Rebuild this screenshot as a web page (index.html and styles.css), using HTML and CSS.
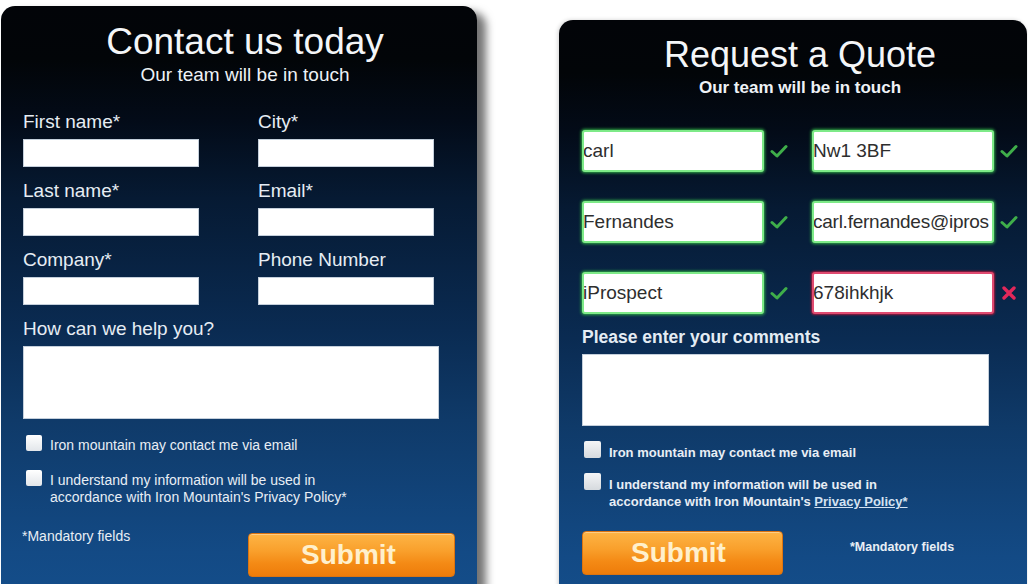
FILE: index.html
```html
<!DOCTYPE html>
<html>
<head>
<meta charset="utf-8">
<title>Forms</title>
<link rel="stylesheet" href="styles.css">
</head>
<body>
<div class="stage">
  <section class="panel contact">
    <header class="head">
      <h1 class="title">Contact us today</h1>
      <p class="subtitle">Our team will be in touch</p>
    </header>
    <div class="grid">
      <div class="field"><span class="lbl">First name*</span><div class="box"></div></div>
      <div class="field"><span class="lbl">City*</span><div class="box"></div></div>
      <div class="field"><span class="lbl">Last name*</span><div class="box"></div></div>
      <div class="field"><span class="lbl">Email*</span><div class="box"></div></div>
      <div class="field"><span class="lbl">Company*</span><div class="box"></div></div>
      <div class="field"><span class="lbl">Phone Number</span><div class="box"></div></div>
    </div>
    <span class="lbl area-lbl">How can we help you?</span>
    <div class="area"></div>
    <div class="checks">
      <div class="check"><span class="cb"></span><span class="ctext">Iron mountain may contact me via email</span></div>
      <div class="check"><span class="cb"></span><span class="ctext">I understand my information will be used in<br>accordance with Iron Mountain's Privacy Policy*</span></div>
    </div>
    <div class="foot">
      <span class="mand">*Mandatory fields</span>
      <button class="submit" type="button">Submit</button>
    </div>
  </section>

  <section class="panel quote">
    <header class="head">
      <h1 class="title">Request a Quote</h1>
      <p class="subtitle">Our team will be in touch</p>
    </header>
    <div class="qgrid">
      <div class="qfield"><div class="qbox ok">carl</div><svg class="tick" viewBox="0 0 18 14"><path d="M2 7.5 L7 12 L16 2.5"/></svg></div>
      <div class="qfield"><div class="qbox ok">Nw1 3BF</div><svg class="tick" viewBox="0 0 18 14"><path d="M2 7.5 L7 12 L16 2.5"/></svg></div>
      <div class="qfield"><div class="qbox ok">Fernandes</div><svg class="tick" viewBox="0 0 18 14"><path d="M2 7.5 L7 12 L16 2.5"/></svg></div>
      <div class="qfield"><div class="qbox ok tight">carl.fernandes@ipros</div><svg class="tick" viewBox="0 0 18 14"><path d="M2 7.5 L7 12 L16 2.5"/></svg></div>
      <div class="qfield"><div class="qbox ok">iProspect</div><svg class="tick" viewBox="0 0 18 14"><path d="M2 7.5 L7 12 L16 2.5"/></svg></div>
      <div class="qfield"><div class="qbox bad">678ihkhjk</div><svg class="cross" viewBox="0 0 18 14"><path d="M4 2 L14 12 M14 2 L4 12"/></svg></div>
    </div>
    <span class="qlbl">Please enter your comments</span>
    <div class="qarea"></div>
    <div class="qchecks">
      <div class="qcheck"><span class="qcb"></span><span class="qctext">Iron mountain may contact me via email</span></div>
      <div class="qcheck"><span class="qcb"></span><span class="qctext">I understand my information will be used in<br>accordance with Iron Mountain's <span class="link">Privacy Policy*</span></span></div>
    </div>
    <div class="qfoot">
      <button class="submit qsubmit" type="button">Submit</button>
      <span class="qmand">*Mandatory fields</span>
    </div>
  </section>
</div>
</body>
</html>
```

FILE: styles.css
```css
html, body {
  margin: 0;
  padding: 0;
  height: 584px;
  overflow: hidden;
  background: #ffffff;
  font-family: "Liberation Sans", Arial, sans-serif;
}

.stage {
  display: flex;
  align-items: flex-start;
  height: 584px;
}

.panel {
  box-sizing: border-box;
  border-radius: 14px 14px 0 0;
  color: #eef3f9;
  background: linear-gradient(to bottom,
    #020408 0%,
    #020508 9%,
    #030b18 19%,
    #061a33 32%,
    #0a2b52 54%,
    #0f3a69 69%,
    #134a85 91%,
    #144e8b 100%);
}

.contact {
  margin: 6px 0 0 1px;
  width: 476px;
  height: 600px;
  flex: none;
  padding: 16px 38px 0 22px;
  box-shadow: 9px 6px 9px rgba(0, 0, 0, 0.55);
}

.quote {
  margin: 20px 0 0 82px;
  width: 468px;
  height: 590px;
  flex: none;
  padding: 15px 9px 0 23px;
  box-shadow: -1px 0 4px rgba(0, 0, 0, 0.18);
}

.head {
  text-align: center;
}

.contact .head {
  margin: 0 -38px 0 -22px;
  padding-left: 12px;
}

.quote .head {
  margin: 0 -9px 0 -23px;
  padding-left: 14px;
}

.title {
  margin: 0;
  font-weight: normal;
  color: #f4f6f8;
}

.contact .title {
  font-size: 37px;
  line-height: 40px;
}

.quote .title {
  font-size: 36px;
  line-height: 40px;
}

.subtitle {
  margin: 2px 0 0;
  color: #eef2f6;
}

.contact .subtitle {
  font-size: 19px;
  line-height: 22px;
}

.quote .subtitle {
  margin-top: 3px;
  font-size: 17px;
  line-height: 20px;
  font-weight: bold;
}

/* Left form */
.grid {
  margin-top: 25px;
  display: grid;
  grid-template-columns: 176px 176px;
  column-gap: 59px;
  row-gap: 13px;
}

.field {
  display: flex;
  flex-direction: column;
}

.lbl {
  display: block;
  font-size: 19px;
  line-height: 22px;
  color: #e6edf4;
  margin-bottom: 6px;
}

.box {
  box-sizing: border-box;
  height: 28px;
  background: #ffffff;
  border: 1px solid #c4cfdb;
}

.area-lbl {
  margin-top: 13px;
}

.area {
  box-sizing: border-box;
  width: 416px;
  height: 73px;
  background: #ffffff;
  border: 1px solid #c4cfdb;
}

.checks {
  margin-top: 18px;
  display: flex;
  flex-direction: column;
  gap: 18px;
}

.check {
  display: flex;
  align-items: flex-start;
  gap: 8px;
}

.cb {
  flex: none;
  width: 16px;
  height: 16px;
  margin: -2px 0 0 3px;
  border-radius: 2px;
  background: linear-gradient(#ffffff, #e2e6ea);
}

.ctext {
  font-size: 14px;
  line-height: 17px;
  color: #e8eef5;
}

.foot {
  margin: 22px -16px 0 0;
  display: flex;
  justify-content: space-between;
  align-items: flex-start;
}

.mand {
  margin-left: -1px;
  font-size: 14px;
  line-height: 16px;
  color: #e8eef5;
}

.submit {
  box-sizing: border-box;
  width: 207px;
  height: 44px;
  margin-top: 5px;
  padding: 0 6px 0 0;
  border: 1px solid #dc7410;
  border-radius: 4px;
  background: linear-gradient(to bottom, #fdb445 0%, #f9a02c 40%, #f48a15 70%, #ee7c0a 100%);
  box-shadow: inset 0 1px 0 rgba(255, 255, 255, 0.35);
  color: #fff0cc;
  font-family: "Liberation Sans", Arial, sans-serif;
  font-weight: bold;
  font-size: 28px;
  line-height: 42px;
  text-align: center;
}

/* Right form */
.qgrid {
  margin-top: 32px;
  display: grid;
  grid-template-columns: 205px 205px;
  column-gap: 25px;
  row-gap: 29px;
}

.qfield {
  display: flex;
  align-items: center;
  gap: 6px;
}

.qbox {
  box-sizing: border-box;
  flex: none;
  width: 182px;
  height: 42px;
  padding-left: 0;
  text-indent: -1px;
  background: #ffffff;
  border-radius: 3px;
  font-size: 19px;
  line-height: 38px;
  color: #2e2e2e;
  white-space: nowrap;
  overflow: hidden;
}

.qbox.tight {
  letter-spacing: -0.25px;
}

.qbox.ok {
  border: 2px solid #7eea88;
  box-shadow: 0 0 3px 1px #2fa845;
}

.qbox.bad {
  border: 2px solid #e04a70;
  box-shadow: 0 0 2px 1px #9c1a3c;
}

.tick,
.cross {
  flex: none;
  width: 18px;
  height: 14px;
  fill: none;
}

.tick path {
  stroke: #3fae4a;
  stroke-width: 3;
  stroke-linecap: round;
  stroke-linejoin: round;
}

.cross path {
  stroke: #e2285a;
  stroke-width: 3.4;
  stroke-linecap: round;
}

.qlbl {
  display: block;
  margin-top: 12px;
  margin-bottom: 6px;
  font-size: 17.5px;
  line-height: 22px;
  font-weight: bold;
  color: #e4ecf4;
}

.qarea {
  box-sizing: border-box;
  width: 407px;
  height: 72px;
  background: #ffffff;
  border: 1px solid #c4cfdb;
}

.qchecks {
  margin-top: 18px;
  display: flex;
  flex-direction: column;
  gap: 15px;
}

.qcheck {
  display: flex;
  align-items: flex-start;
  gap: 8px;
}

.qcb {
  flex: none;
  width: 17px;
  height: 17px;
  margin: -3px 0 0 2px;
  border-radius: 2px;
  background: linear-gradient(#f4f5f6, #d6dade);
}

.qctext {
  font-size: 13px;
  line-height: 17px;
  font-weight: bold;
  color: #e8eef5;
}

.link {
  text-decoration: underline;
  color: #d4e2f2;
}

.qfoot {
  margin-top: 21px;
  display: flex;
  align-items: flex-start;
}

.qsubmit {
  width: 201px;
  margin-top: 0;
  padding-right: 8px;
}

.qmand {
  margin: 9px 0 0 67px;
  font-size: 12.5px;
  line-height: 15px;
  font-weight: bold;
  color: #e8eef5;
}
```
